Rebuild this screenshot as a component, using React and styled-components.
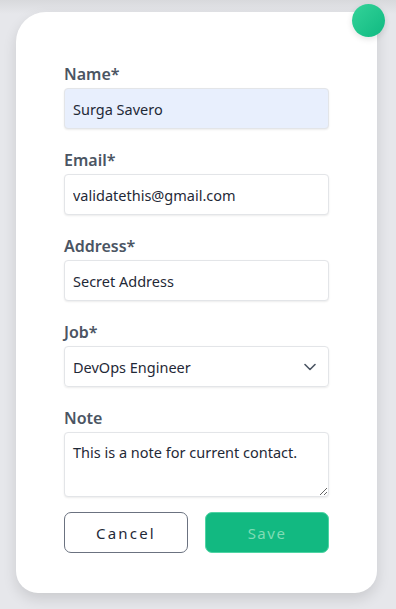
import React from 'react'
import styled, { createGlobalStyle } from 'styled-components'

const GlobalStyle = createGlobalStyle`
    html, body {
        margin: 0;
        padding: 0;
        background: #e6e7eb;
        font-family: "Noto Sans", "Open Sans", sans-serif;
    }
    * { box-sizing: border-box; }
`;

const Page = styled.div`
    width: 396px;
    height: 609px;
    padding: 12px 19px 0 16px;
    background: linear-gradient(to bottom, #d8d9dc 0px, #e6e7eb 14px, #e6e7eb 100%);
    overflow: hidden;
`;

const Card = styled.form`
    position: relative;
    width: 361px;
    height: 581px;
    background: #ffffff;
    border-radius: 30px 0 22px 22px;
    padding: 51px 48px 40px 48px;
    box-shadow: 0 6px 14px rgba(0, 0, 0, 0.12);
    display: flex;
    flex-direction: column;
`;

const Dot = styled.div`
    position: absolute;
    top: -8px;
    right: -8px;
    width: 33px;
    height: 33px;
    border-radius: 50%;
    background: linear-gradient(135deg, #34d399, #10b981);
    box-shadow: 0 2px 6px rgba(0, 0, 0, 0.12);
`;

const Field = styled.div`
    display: flex;
    flex-direction: column;
    gap: 3px;
    margin-bottom: ${({ $last }) => ($last ? '15px' : '20px')};
`;

const Label = styled.label`
    font-size: 16px;
    line-height: 22px;
    font-weight: 600;
    color: #4b5563;
`;

const Input = styled.input`
    height: 41px;
    width: 100%;
    padding: 0 8px;
    font-family: inherit;
    font-size: 14.5px;
    color: #1f2937;
    background: ${({ $filled }) => ($filled ? '#e8effd' : '#ffffff')};
    border: 1px solid #e3e5e8;
    border-radius: 4px;
    box-shadow: 0 1px 2px rgba(0, 0, 0, 0.08);
    outline: none;
`;

const SelectBox = styled.div`
    height: 41px;
    display: flex;
    align-items: center;
    justify-content: space-between;
    padding: 0 12px 0 8px;
    font-size: 14.5px;
    color: #1f2937;
    border: 1px solid #e3e5e8;
    border-radius: 4px;
    box-shadow: 0 1px 2px rgba(0, 0, 0, 0.08);
`;

const TextArea = styled.textarea`
    height: 65px;
    width: 100%;
    padding: 9px 8px;
    font-family: inherit;
    font-size: 14.5px;
    line-height: 20px;
    color: #1f2937;
    border: 1px solid #e3e5e8;
    border-radius: 4px;
    box-shadow: 0 1px 2px rgba(0, 0, 0, 0.08);
    resize: vertical;
    outline: none;
`;

const Actions = styled.div`
    display: flex;
    gap: 17px;
`;

const Button = styled.button`
    flex: 1;
    height: 41px;
    border-radius: 7px;
    font-family: inherit;
    font-size: 15px;
    letter-spacing: ${({ $primary }) => ($primary ? '1.5px' : '2.2px')};
    color: ${({ $primary }) => ($primary ? '#7fdcb5' : '#1f2937')};
    background: ${({ $primary }) => ($primary ? '#12b981' : '#ffffff')};
    border: 1px solid ${({ $primary }) => ($primary ? '#4fd4a4' : '#6b7280')};
    cursor: pointer;
`;

const Chevron = () => (
  <svg width="12" height="8" viewBox="0 0 12 8" fill="none">
    <path d="M1 1.5l5 5 5-5" stroke="#4b5563" strokeWidth="1.6" strokeLinecap="round" strokeLinejoin="round" />
  </svg>
)

const App = () => {
  return (
    <Page>
      <GlobalStyle />
      <Card onSubmit={(e) => e.preventDefault()}>
        <Dot />
        <Field>
          <Label>Name*</Label>
          <Input $filled defaultValue="Surga Savero" />
        </Field>
        <Field>
          <Label>Email*</Label>
          <Input defaultValue="validatethis@gmail.com" />
        </Field>
        <Field>
          <Label>Address*</Label>
          <Input defaultValue="Secret Address" />
        </Field>
        <Field>
          <Label>Job*</Label>
          <SelectBox>
            <span>DevOps Engineer</span>
            <Chevron />
          </SelectBox>
        </Field>
        <Field $last>
          <Label>Note</Label>
          <TextArea defaultValue="This is a note for current contact." />
        </Field>
        <Actions>
          <Button type="button">Cancel</Button>
          <Button type="submit" $primary>Save</Button>
        </Actions>
      </Card>
    </Page>
  )
}

export default App
